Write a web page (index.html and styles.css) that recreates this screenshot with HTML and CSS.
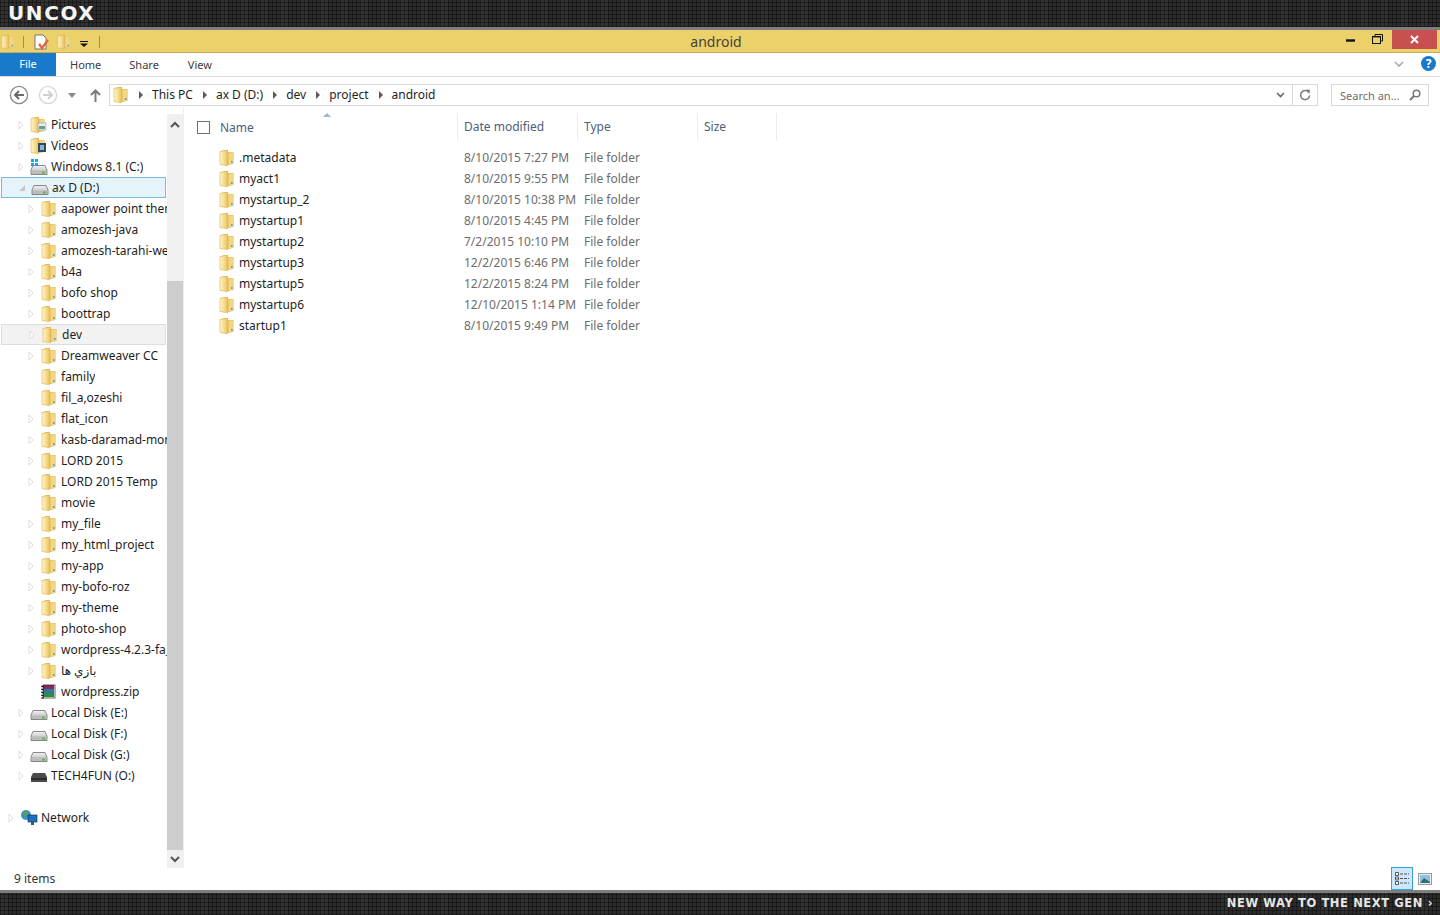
FILE: index.html
```html
<!DOCTYPE html>
<html lang="en">
<head>
<meta charset="utf-8">
<title>android</title>
<link rel="stylesheet" href="styles.css">
</head>
<body>
<svg class="defs" width="0" height="0" aria-hidden="true">
  <defs>
    <linearGradient id="fg" x1="0" y1="0" x2="1" y2="0">
      <stop offset="0" stop-color="#fff6cf"/><stop offset=".55" stop-color="#f6dc8c"/><stop offset="1" stop-color="#e9c25f"/>
    </linearGradient>
    <linearGradient id="dg" x1="0" y1="0" x2="0" y2="1">
      <stop offset="0" stop-color="#f2f2f2"/><stop offset=".5" stop-color="#d2d2d2"/><stop offset="1" stop-color="#8f8f8f"/>
    </linearGradient>
    <symbol id="folder" viewBox="0 0 16 18">
      <path d="M1 2.5 L5.5 1 H9 V3 H14.5 V15 L9 16 L1 15.5Z" fill="#e3bb58"/>
      <path d="M9.5 3.5 H14.5 V15 H9.5Z" fill="#f3d684"/>
      <path d="M1 2.5 L8.5 1.2 V16.8 L1 15.5Z" fill="url(#fg)" stroke="#dcb65a" stroke-width=".6"/>
      <rect x="12" y="12" width="1.6" height="2" fill="#5ba6d6"/>
    </symbol>
    <symbol id="disk" viewBox="0 0 18 12">
      <path d="M3 1.5 H15 L17 6 V10.5 H1 V6Z" fill="url(#dg)" stroke="#6e6e6e" stroke-width=".8"/>
      <rect x="1.5" y="6.5" width="15" height="3.6" fill="#bcbcbc"/>
      <rect x="12" y="7.5" width="3" height="2" fill="#5dbb46"/>
    </symbol>
    <symbol id="tri" viewBox="0 0 6 10">
      <path d="M1 1 L5 5 L1 9Z" fill="#fff" stroke="#dedede"/>
    </symbol>
  </defs>
</svg>

<header class="banner"><span class="logo">UNCOX</span></header>

<main class="window">
  <div class="titlebar">
    <div class="qat">
      <svg class="ic16 qat-folder"><use href="#folder"/></svg>
      <i class="qat-sep"></i>
      <svg class="ic16 qat-prop" viewBox="0 0 16 16"><path d="M2 1 H10 L13 4 V15 H2Z" fill="#fff" stroke="#777"/><path d="M6 10 L9 14 L15 6" fill="none" stroke="#e2673c" stroke-width="2.4"/></svg>
      <svg class="ic16 qat-new"><use href="#folder"/></svg>
      <svg class="qat-drop" viewBox="0 0 8 6" width="8" height="6"><rect width="8" height="1" fill="#111"/><path d="M0 2.5 H8 L4 6Z" fill="#111"/></svg>
      <i class="qat-sep qat-sep2"></i>
    </div>
    <h1 class="title">android</h1>
    <div class="winbtns">
      <svg class="wb-min" width="9" height="3" viewBox="0 0 9 3"><rect width="9" height="2.4" y=".3" fill="#111"/></svg>
      <svg class="wb-max" width="11" height="10" viewBox="0 0 11 10"><path d="M3 2.5 V.5 H10.5 V7 H8.5" fill="none" stroke="#111"/><rect x=".5" y="2.5" width="8" height="7" fill="none" stroke="#111" stroke-width="1"/><rect x="1" y="2" width="7" height="1.4" fill="#111"/></svg>
      <div class="wb-close"><svg width="9" height="9" viewBox="0 0 9 9"><path d="M1 1 L8 8 M8 1 L1 8" stroke="#fff" stroke-width="2"/></svg></div>
    </div>
  </div>

  <nav class="tabs">
    <a class="tab-file">File</a>
    <a class="tab tab-home">Home</a>
    <a class="tab tab-share">Share</a>
    <a class="tab tab-view">View</a>
    <span class="grow"></span>
    <svg class="ribbon-chev" width="10" height="6" viewBox="0 0 10 6"><path d="M1 1 L5 5 L9 1" fill="none" stroke="#a8a8a8" stroke-width="1.6"/></svg>
    <span class="help">?</span>
  </nav>

  <div class="addr-row">
    <svg class="nav-back" width="20" height="20" viewBox="0 0 20 20"><circle cx="10" cy="10" r="8.6" fill="#fff" stroke="#8a8a8a" stroke-width="1.3"/><path d="M15 10 H6 M10 6 L6 10 L10 14" fill="none" stroke="#6a6a6a" stroke-width="2"/></svg>
    <svg class="nav-fwd" width="20" height="20" viewBox="0 0 20 20"><circle cx="10" cy="10" r="8.6" fill="#fff" stroke="#d6d6d6" stroke-width="1.3"/><path d="M5 10 H14 M10 6 L14 10 L10 14" fill="none" stroke="#d0d0d0" stroke-width="2"/></svg>
    <svg class="nav-drop" width="8" height="5" viewBox="0 0 8 5"><path d="M0 0 H8 L4 5Z" fill="#8a8a8a"/></svg>
    <svg class="nav-up" width="11" height="13" viewBox="0 0 11 13"><path d="M5.5 13 V2 M1 6 L5.5 1.5 L10 6" fill="none" stroke="#7a7a7a" stroke-width="2"/></svg>
    <div class="addr">
      <svg class="addr-folder"><use href="#folder"/></svg>
      <span class="crumb">This PC</span>
      <span class="crumb">ax D (D:)</span>
      <span class="crumb">dev</span>
      <span class="crumb">project</span>
      <span class="crumb">android</span>
      <span class="grow"></span>
      <svg class="addr-drop" width="9" height="6" viewBox="0 0 9 6"><path d="M1 1 L4.5 4.5 L8 1" fill="none" stroke="#666" stroke-width="1.6"/></svg>
      <span class="addr-refresh"><svg width="12" height="12" viewBox="0 0 12 12"><path d="M9.6 3.2 A4.5 4.5 0 1 0 10.6 6.5" fill="none" stroke="#7d7d7d" stroke-width="1.6"/><path d="M7 .5 L11 .8 L10.4 5Z" fill="#7d7d7d"/></svg></span>
    </div>
    <div class="search">
      <span class="search-text">Search an...</span>
      <svg width="12" height="12" viewBox="0 0 12 12"><circle cx="7.5" cy="4.5" r="3.3" fill="none" stroke="#777" stroke-width="1.5"/><path d="M5 7 L1 11" stroke="#777" stroke-width="2"/></svg>
    </div>
  </div>

  <div class="content">
    <aside class="tree-wrap">
      <ul class="tree">
        <li class="node l1"><svg class="tri"><use href="#tri"/></svg><svg class="ti" viewBox="0 0 18 18"><use href="#folder" width="16" height="18"/><rect x="8" y="7" width="8" height="7" fill="#e8f2f4" stroke="#7f9aa5" stroke-width=".6"/><rect x="9" y="10" width="6" height="3" fill="#6f9c8e"/></svg><span>Pictures</span></li>
        <li class="node l1"><svg class="tri"><use href="#tri"/></svg><svg class="ti" viewBox="0 0 18 18"><use href="#folder" width="16" height="18"/><rect x="8" y="6" width="8" height="9" fill="#34495a"/><rect x="10" y="8" width="4" height="5" fill="#7fb6d9"/></svg><span>Videos</span></li>
        <li class="node l1"><svg class="tri"><use href="#tri"/></svg><svg class="ti" viewBox="0 0 18 18"><use href="#disk" y="6" width="18" height="12"/><path d="M1 1 H4 V4 H1Z M5 1 H8 V4 H5Z M1 5 H4 V8 H1Z M5 5 H8 V8 H5Z" fill="#10a5e8"/></svg><span>Windows 8.1 (C:)</span></li>
        <li class="node l1 sel"><svg class="tri"><path d="M6 1 V7 H0Z" fill="#c8c8c8" transform="translate(0 1)"/></svg><svg class="ti" viewBox="0 0 18 18"><use href="#disk" y="5" width="18" height="12"/></svg><span>ax D (D:)</span></li>
        <li class="node l2"><svg class="tri"><use href="#tri"/></svg><svg class="ti"><use href="#folder"/></svg><span>aapower point theme</span></li>
        <li class="node l2"><svg class="tri"><use href="#tri"/></svg><svg class="ti"><use href="#folder"/></svg><span>amozesh-java</span></li>
        <li class="node l2"><svg class="tri"><use href="#tri"/></svg><svg class="ti"><use href="#folder"/></svg><span>amozesh-tarahi-web</span></li>
        <li class="node l2"><svg class="tri"><use href="#tri"/></svg><svg class="ti"><use href="#folder"/></svg><span>b4a</span></li>
        <li class="node l2"><svg class="tri"><use href="#tri"/></svg><svg class="ti"><use href="#folder"/></svg><span>bofo shop</span></li>
        <li class="node l2"><svg class="tri"><use href="#tri"/></svg><svg class="ti"><use href="#folder"/></svg><span>boottrap</span></li>
        <li class="node l2 cur"><svg class="tri"><use href="#tri"/></svg><svg class="ti"><use href="#folder"/></svg><span>dev</span></li>
        <li class="node l2"><svg class="tri"><use href="#tri"/></svg><svg class="ti"><use href="#folder"/></svg><span>Dreamweaver CC</span></li>
        <li class="node l2"><svg class="tri"></svg><svg class="ti"><use href="#folder"/></svg><span>family</span></li>
        <li class="node l2"><svg class="tri"></svg><svg class="ti"><use href="#folder"/></svg><span>fil_a,ozeshi</span></li>
        <li class="node l2"><svg class="tri"><use href="#tri"/></svg><svg class="ti"><use href="#folder"/></svg><span>flat_icon</span></li>
        <li class="node l2"><svg class="tri"><use href="#tri"/></svg><svg class="ti"><use href="#folder"/></svg><span>kasb-daramad-money</span></li>
        <li class="node l2"><svg class="tri"><use href="#tri"/></svg><svg class="ti"><use href="#folder"/></svg><span>LORD 2015</span></li>
        <li class="node l2"><svg class="tri"><use href="#tri"/></svg><svg class="ti"><use href="#folder"/></svg><span>LORD 2015 Temp</span></li>
        <li class="node l2"><svg class="tri"></svg><svg class="ti"><use href="#folder"/></svg><span>movie</span></li>
        <li class="node l2"><svg class="tri"><use href="#tri"/></svg><svg class="ti"><use href="#folder"/></svg><span>my_file</span></li>
        <li class="node l2"><svg class="tri"><use href="#tri"/></svg><svg class="ti"><use href="#folder"/></svg><span>my_html_project</span></li>
        <li class="node l2"><svg class="tri"><use href="#tri"/></svg><svg class="ti"><use href="#folder"/></svg><span>my-app</span></li>
        <li class="node l2"><svg class="tri"><use href="#tri"/></svg><svg class="ti"><use href="#folder"/></svg><span>my-bofo-roz</span></li>
        <li class="node l2"><svg class="tri"><use href="#tri"/></svg><svg class="ti"><use href="#folder"/></svg><span>my-theme</span></li>
        <li class="node l2"><svg class="tri"><use href="#tri"/></svg><svg class="ti"><use href="#folder"/></svg><span>photo-shop</span></li>
        <li class="node l2"><svg class="tri"><use href="#tri"/></svg><svg class="ti"><use href="#folder"/></svg><span>wordpress-4.2.3-fa_IR</span></li>
        <li class="node l2"><svg class="tri"><use href="#tri"/></svg><svg class="ti"><use href="#folder"/></svg><span>بازي ها</span></li>
        <li class="node l2"><svg class="tri"></svg><svg class="ti" viewBox="0 0 16 16"><rect x="2" y="1" width="11" height="4" fill="#8c2a5c"/><rect x="2" y="5" width="11" height="4" fill="#2a7c9c"/><rect x="2" y="9" width="11" height="4" fill="#2d8a45"/><path d="M0 2 L3 3 M0 5 L3 6 M0 8 L3 9 M0 11 L3 12 M0 14 L3 14" stroke="#111" stroke-width="1"/><rect x="2" y="1" width="12" height="13" fill="none" stroke="#222" stroke-width=".7"/></svg><span>wordpress.zip</span></li>
        <li class="node l1"><svg class="tri"><use href="#tri"/></svg><svg class="ti" viewBox="0 0 18 18"><use href="#disk" y="5" width="18" height="12"/></svg><span>Local Disk (E:)</span></li>
        <li class="node l1"><svg class="tri"><use href="#tri"/></svg><svg class="ti" viewBox="0 0 18 18"><use href="#disk" y="5" width="18" height="12"/></svg><span>Local Disk (F:)</span></li>
        <li class="node l1"><svg class="tri"><use href="#tri"/></svg><svg class="ti" viewBox="0 0 18 18"><use href="#disk" y="5" width="18" height="12"/></svg><span>Local Disk (G:)</span></li>
        <li class="node l1"><svg class="tri"><use href="#tri"/></svg><svg class="ti" viewBox="0 0 18 18"><path d="M3 6 H15 L17 10 V15 H1 V10Z" fill="#4a4a4a"/><rect x="1" y="11" width="16" height="2" fill="#2c2c2c"/></svg><span>TECH4FUN (O:)</span></li>
        <li class="node spacer"></li>
        <li class="node l0"><svg class="tri"><use href="#tri"/></svg><svg class="ti" viewBox="0 0 18 18"><circle cx="6" cy="6" r="5" fill="#3f8fd0"/><path d="M3 3 L7 2 L8 5 L4 8Z" fill="#55a648"/><rect x="8" y="6" width="9" height="7" fill="#1f6fc0" stroke="#123" stroke-width=".6"/><rect x="11" y="13" width="3" height="3" fill="#456"/></svg><span>Network</span></li>
      </ul>
      <div class="sb">
        <svg class="sb-arrow" width="16" height="20" viewBox="0 0 16 20"><path d="M4 13 L8 9 L12 13" fill="none" stroke="#555" stroke-width="2"/></svg>
        <div class="sb-gap"></div>
        <div class="sb-thumb"></div>
        <svg class="sb-arrow" width="16" height="18" viewBox="0 0 16 18"><path d="M4 7 L8 11 L12 7" fill="none" stroke="#555" stroke-width="2"/></svg>
      </div>
    </aside>

    <section class="list">
      <div class="list-head">
        <span class="name-head"><i class="check"></i><span>Name</span>
          <svg class="sort" width="8" height="4" viewBox="0 0 8 4"><path d="M0 4 L4 0 L8 4Z" fill="#9db4c9"/></svg>
        </span>
        <span class="col">Date modified</span>
        <span class="col">Type</span>
        <span class="col col-last">Size</span>
      </div>
      <div class="row"><span class="fname"><svg class="fi"><use href="#folder"/></svg>.metadata</span><span class="cell">8/10/2015 7:27 PM</span><span class="cell">File folder</span></div>
      <div class="row"><span class="fname"><svg class="fi"><use href="#folder"/></svg>myact1</span><span class="cell">8/10/2015 9:55 PM</span><span class="cell">File folder</span></div>
      <div class="row"><span class="fname"><svg class="fi"><use href="#folder"/></svg>mystartup_2</span><span class="cell">8/10/2015 10:38 PM</span><span class="cell">File folder</span></div>
      <div class="row"><span class="fname"><svg class="fi"><use href="#folder"/></svg>mystartup1</span><span class="cell">8/10/2015 4:45 PM</span><span class="cell">File folder</span></div>
      <div class="row"><span class="fname"><svg class="fi"><use href="#folder"/></svg>mystartup2</span><span class="cell">7/2/2015 10:10 PM</span><span class="cell">File folder</span></div>
      <div class="row"><span class="fname"><svg class="fi"><use href="#folder"/></svg>mystartup3</span><span class="cell">12/2/2015 6:46 PM</span><span class="cell">File folder</span></div>
      <div class="row"><span class="fname"><svg class="fi"><use href="#folder"/></svg>mystartup5</span><span class="cell">12/2/2015 8:24 PM</span><span class="cell">File folder</span></div>
      <div class="row"><span class="fname"><svg class="fi"><use href="#folder"/></svg>mystartup6</span><span class="cell">12/10/2015 1:14 PM</span><span class="cell">File folder</span></div>
      <div class="row"><span class="fname"><svg class="fi"><use href="#folder"/></svg>startup1</span><span class="cell">8/10/2015 9:49 PM</span><span class="cell">File folder</span></div>
    </section>
  </div>

  <div class="status">
    <span class="count">9 items</span>
    <span class="grow"></span>
    <span class="view-btn view-on"><svg width="16" height="15" viewBox="0 0 16 15"><path d="M1.5 1.5 H4.5 V4.5 H1.5Z M1.5 6 H4.5 V9 H1.5Z M1.5 10.5 H4.5 V13.5 H1.5Z" fill="#fff" stroke="#555"/><rect x="2.5" y="7" width="1" height="1" fill="#d33"/><path d="M6 3 H15 M6 7.5 H15 M6 12 H15" stroke="#555" stroke-dasharray="3 1"/></svg></span>
    <span class="view-btn"><svg width="14" height="12" viewBox="0 0 14 12"><rect x=".5" y=".5" width="13" height="11" fill="#eee" stroke="#999"/><rect x="2" y="2" width="10" height="8" fill="#8fc2e2"/><path d="M2 10 L6 5 L12 9 V10Z" fill="#2c6e73"/></svg></span>
  </div>
</main>

<footer class="bottom"><span class="tagline">NEW WAY TO THE NEXT GEN ›</span></footer>
</body>
</html>
```
FILE: styles.css
```css
* { box-sizing: border-box; }
html, body { margin: 0; height: 100%; }
body {
  width: 1440px;
  height: 915px;
  overflow: hidden;
  display: flex;
  flex-direction: column;
  font-family: "Noto Sans", "DejaVu Sans", sans-serif;
  font-size: 12px;
  color: #1e1e1e;
  background: #fff;
}
.defs { position: absolute; }
.grow { flex: 1; }
ul { list-style: none; margin: 0; padding: 0; }

.banner, .bottom {
  background-color: #2b2b2b;
  background-image:
    repeating-linear-gradient(0deg, rgba(0,0,0,.35) 0 1px, transparent 1px 4px),
    repeating-linear-gradient(90deg, rgba(0,0,0,.35) 0 1px, transparent 1px 4px),
    repeating-linear-gradient(90deg, rgba(255,255,255,.03) 0 8px, transparent 8px 20px);
}
.banner { height: 30px; border-bottom: 3px solid #7e7e7e; padding-left: 8px; display: flex; align-items: center; flex: none; }
.logo {
  font-family: "DejaVu Sans", sans-serif;
  font-weight: 700;
  font-size: 20px;
  line-height: 1;
  letter-spacing: 1.6px;
  color: #f4f4f4;
  position: relative;
  top: -1px;
}
.window { flex: 1; min-height: 0; display: flex; flex-direction: column; }

.titlebar {
  height: 23px;
  flex: none;
  background: #ecd16b;
  border-bottom: 1px solid #c8ac50;
  display: flex;
  align-items: flex-start;
  position: relative;
}
.qat { display: flex; align-items: center; height: 22px; padding-top: 2px; }
.ic16 { width: 16px; height: 16px; }
.qat-folder { margin-left: 0; }
.qat-sep { width: 1px; height: 12px; background: #a48f45; margin-left: 7px; }
.qat-prop { margin-left: 9px; }
.qat-new { margin-left: 7px; }
.qat-drop { margin-left: 8px; margin-top: 3px; }
.qat-sep2 { margin-left: 11px; }
.title {
  position: absolute;
  left: 0;
  right: 0;
  top: 0;
  margin: 0;
  padding-left: 552px;
  width: 1440px;
  text-align: center;
  padding-right: 560px;
  font-size: 14px;
  font-weight: 400;
  line-height: 23px;
  color: #44423a;
}
.winbtns { margin-left: auto; display: flex; align-items: flex-start; height: 20px; margin-right: 3px; position: relative; }
.wb-min { margin-top: 9px; margin-right: 17px; }
.wb-max { margin-top: 4px; margin-right: 9px; }
.wb-close { width: 45px; height: 19px; background: #c75050; display: flex; align-items: center; justify-content: center; }

.tabs {
  height: 24px;
  flex: none;
  display: flex;
  align-items: center;
  border-bottom: 1px solid #dadada;
  font-size: 11px;
  color: #3c3c3c;
}
.tab-file {
  width: 56px;
  height: 23px;
  background: #1979ca;
  color: #fff;
  text-align: center;
  line-height: 22px;
}
.tab { display: block; line-height: 24px; padding-top: 1px; }
.tab-home { margin-left: 14px; }
.tab-share { margin-left: 28px; }
.tab-view { margin-left: 29px; }
.ribbon-chev { margin-right: 17px; margin-top: -2px; }
.help {
  width: 15px;
  height: 15px;
  border-radius: 50%;
  background: #1979ca;
  color: #fff;
  font-weight: 700;
  font-size: 12px;
  line-height: 15px;
  text-align: center;
  margin-right: 4px;
  margin-top: -2px;
}

.addr-row {
  height: 30px;
  flex: none;
  display: flex;
  align-items: flex-start;
  padding-top: 7px;
}
.nav-back { margin-left: 9px; margin-top: 1px; }
.nav-fwd { margin-left: 9px; margin-top: 1px; }
.nav-drop { margin-left: 10px; margin-top: 9px; }
.nav-up { margin-left: 14px; margin-top: 5px; }
.addr {
  margin-left: 8px;
  width: 1209px;
  height: 22px;
  border: 1px solid #d9d9d9;
  display: flex;
  align-items: center;
  padding-left: 3px;
}
.addr-folder { width: 16px; height: 18px; flex: none; }
.crumb { display: flex; align-items: center; line-height: 20px; font-size: 12px; }
.crumb::before {
  content: "";
  width: 0;
  height: 0;
  border-left: 4px solid #5a5a5a;
  border-top: 4px solid transparent;
  border-bottom: 4px solid transparent;
  margin: 0 9px 0 10px;
}
.addr-drop { margin-right: 7px; }
.addr-refresh {
  width: 25px;
  height: 20px;
  border-left: 1px solid #d9d9d9;
  display: flex;
  align-items: center;
  justify-content: center;
}
.search {
  margin-left: 13px;
  width: 98px;
  height: 22px;
  border: 1px solid #d9d9d9;
  display: flex;
  align-items: center;
  justify-content: space-between;
  padding: 0 7px 0 8px;
  color: #6d6d6d;
}
.search-text { font-size: 11px; }

.content { flex: 1; min-height: 0; display: flex; border-top: 0; }
.tree-wrap { width: 184px; flex: none; display: flex; padding-top: 7px; border-right: 1px solid #efefef; height: 761px; }
.tree { width: 167px; flex: none; overflow: hidden; }
.node {
  height: 21px;
  display: flex;
  align-items: center;
  white-space: nowrap;
  overflow: hidden;
  line-height: 21px;
}
.node.l0 { padding-left: 8px; }
.node.l1 { padding-left: 18px; }
.node.l2 { padding-left: 28px; }
.tri { width: 6px; height: 10px; flex: none; margin-right: 6px; }
.ti { width: 18px; height: 18px; flex: none; margin-right: 3px; }
.node.l2 .ti { width: 16px; height: 18px; margin-right: 4px; margin-left: 0; }
.node.l2 .tri { margin-right: 7px; }
.node span { overflow: hidden; }
.sel { margin: 0 1px; padding-left: 17px !important; background: #e5f3fb; border: 1px solid #7eb8dc; width: 165px; }
.cur { margin: 0 1px; padding-left: 27px !important; background: #f2f2f2; border: 1px solid #dedede; width: 165px; }

.sb { width: 16px; flex: none; background: #f0f0f0; display: flex; flex-direction: column; height: 754px; }
.sb-arrow { flex: none; }
.sb-gap { height: 147px; flex: none; }
.sb-thumb { flex: 1; background: #cdcdcd; }

.list { flex: 1; min-width: 0; }
.list-head {
  display: grid;
  grid-template-columns: 273px 120px 120px 80px;
  height: 40px;
  padding-top: 6px;
  color: #4c607a;
}
.name-head { display: flex; align-items: center; height: 28px; padding-left: 13px; position: relative; }
.check { width: 13px; height: 13px; border: 1px solid #707070; margin-right: 10px; margin-top: 0; }
.sort { position: absolute; left: 139px; top: 0; }
.col { height: 28px; line-height: 28px; padding-left: 6px; border-left: 1px solid #ececec; }
.col-last { border-right: 1px solid #ececec; }
.list-head > .col:first-of-type { }
.row {
  display: grid;
  grid-template-columns: 273px 120px 120px;
  height: 21px;
  line-height: 21px;
  margin-top: 0;
}
.fname { display: flex; align-items: center; padding-left: 35px; }
.fi { width: 16px; height: 18px; flex: none; margin-right: 4px; }
.cell { padding-left: 7px; color: #6d6d6d; }

.status {
  height: 23px;
  flex: none;
  display: flex;
  align-items: center;
  padding-left: 14px;
}
.count { color: #333; }
.view-btn { width: 22px; height: 23px; display: flex; align-items: center; justify-content: center; margin-right: 4px; }
.view-on { background: #cce8ff; border: 1px solid #3aa0d8; margin-right: 0; }
.view-btn:last-child { margin-left: 1px; margin-right: 4px; }

.bottom {
  height: 25px;
  flex: none;
  border-top: 3px solid #7e7e7e;
  display: flex;
  align-items: center;
  justify-content: flex-end;
  padding-right: 7px;
}
.tagline {
  font-family: "DejaVu Sans", sans-serif;
  font-weight: 700;
  font-size: 11.5px;
  letter-spacing: .6px;
  color: #e6e6e6;
  line-height: 1;
}
```
